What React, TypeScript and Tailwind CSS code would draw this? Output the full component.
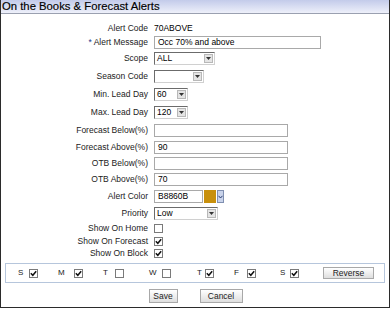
import React from 'react';

const font = "font-['Liberation_Sans',Arial,sans-serif]";

const Check = ({ checked }: { checked?: boolean }) => (
  <span className="inline-flex h-[9px] w-[9px] shrink-0 items-center justify-center border border-[#7a7a7a] bg-white">
    {checked && (
      <svg viewBox="0 0 7 7" className="h-[7px] w-[7px]">
        <path d="M0.8 3.3 L2.8 5.3 L6.2 1.2" fill="none" stroke="#111" strokeWidth="1.5" />
      </svg>
    )}
  </span>
);

const Select = ({ value, width }: { value: string; width: string }) => (
  <div className={`flex h-[13px] items-stretch border border-t-[#6b6b6b] border-l-[#6b6b6b] border-r-[#d0d0d0] border-b-[#d0d0d0] bg-white ${width}`}>
    <span className="flex-1 truncate pl-[2px] leading-[11px] text-[8.5px] text-black">{value}</span>
    <span className="m-[1px] flex w-[9px] items-center justify-center border border-[#b8b8b8] bg-[#e4e4e4]">
      <svg viewBox="0 0 5 3" className="h-[3px] w-[5px]">
        <path d="M0 0 H5 L2.5 3 Z" fill="#333" />
      </svg>
    </span>
  </div>
);

const TextInput = ({ value, width }: { value?: string; width: string }) => (
  <div className={`h-[13px] border border-[#a9a9a9] bg-white pl-[3px] leading-[11px] text-[8.5px] text-black ${width}`}>
    {value}
  </div>
);

const Row = ({ label, h, children, star }: { label: string; h: string; children?: React.ReactNode; star?: boolean }) => (
  <div className={`grid grid-cols-[147px_1fr] items-center gap-x-[6px] ${h}`}>
    <div className="text-right text-[8.5px] text-[#222]">
      {star && <span className="text-[#1a3d8f]">* </span>}
      {label}
    </div>
    <div className="flex items-center">{children}</div>
  </div>
);

const days = [
  { d: 'S', c: true, ml: 'ml-[12px]', w: 'w-[11px]' },
  { d: 'M', c: true, ml: 'ml-[20px]', w: 'w-[16px]' },
  { d: 'T', c: false, ml: 'ml-[20px]', w: 'w-[12px]' },
  { d: 'W', c: false, ml: 'ml-[25px]', w: 'w-[13px]' },
  { d: 'T', c: true, ml: 'ml-[26px]', w: 'w-[8px]' },
  { d: 'F', c: true, ml: 'ml-[20px]', w: 'w-[13px]' },
  { d: 'S', c: true, ml: 'ml-[24px]', w: 'w-[10px]' },
];

export default function App() {
  return (
    <div className={`${font} h-[308px] w-[390px] border-x border-b border-[#2b2b2b] bg-white`}>
      <div className="h-[14px] border-b border-[#9aa0b0] bg-gradient-to-b from-[#c3cbea] to-[#eef0fa] pl-[1px] text-[11.3px] leading-[13px] text-black [-webkit-text-stroke:0.15px_black]">
        On the Books &amp; Forecast Alerts
      </div>
      <div className="pt-[7px]">
        <Row label="Alert Code" h="h-[14px]">
          <span className="text-[8.5px] text-black">70ABOVE</span>
        </Row>
        <Row label="Alert Message" h="h-[15px]" star>
          <TextInput value="Occ 70% and above" width="w-[167px]" />
        </Row>
        <Row label="Scope" h="h-[17px]">
          <Select value="ALL" width="w-[61px]" />
        </Row>
        <Row label="Season Code" h="h-[18px]">
          <Select value="" width="w-[50px]" />
        </Row>
        <Row label="Min. Lead Day" h="h-[18px]">
          <Select value="60" width="w-[34px]" />
        </Row>
        <Row label="Max. Lead Day" h="h-[19px]">
          <Select value="120" width="w-[34px]" />
        </Row>
        <Row label="Forecast Below(%)" h="h-[17px]">
          <TextInput width="w-[134px]" />
        </Row>
        <Row label="Forecast Above(%)" h="h-[16px]">
          <TextInput value="90" width="w-[134px]" />
        </Row>
        <Row label="OTB Below(%)" h="h-[16px]">
          <TextInput width="w-[134px]" />
        </Row>
        <Row label="OTB Above(%)" h="h-[17px]">
          <TextInput value="70" width="w-[134px]" />
        </Row>
        <Row label="Alert Color" h="h-[17px]">
          <TextInput value="B8860B" width="w-[49px]" />
          <span className="ml-[1px] h-[13px] w-[12px] bg-[#c8900c]" />
          <span className="ml-[1px] flex h-[13px] w-[7px] items-center justify-center border border-[#7f8fb0] bg-[#c9d3ea]">
            <svg viewBox="0 0 5 4" className="h-[4px] w-[5px]">
              <path d="M0.5 0.8 L2.5 3 L4.5 0.8" fill="none" stroke="#2c3f73" strokeWidth="1" />
            </svg>
          </span>
        </Row>
        <Row label="Priority" h="h-[16px]">
          <Select value="Low" width="w-[64px]" />
        </Row>
        <Row label="Show On Home" h="h-[14px]">
          <Check />
        </Row>
        <Row label="Show On Forecast" h="h-[12px]">
          <Check checked />
        </Row>
        <Row label="Show On Block" h="h-[12px]">
          <Check checked />
        </Row>
      </div>
      <div className="mx-[4px] mt-[4px] flex h-[20px] items-center border border-[#b6c6dc]">
        {days.map((x, i) => (
          <div key={i} className={`flex items-center ${x.ml}`}>
            <span className={`text-[8px] text-[#222] ${x.w}`}>{x.d}</span>
            <Check checked={x.c} />
          </div>
        ))}
        <button className="ml-[24px] h-[12px] w-[51px] border border-[#a8a8a8] bg-gradient-to-b from-[#ffffff] to-[#dedede] text-[8.5px] leading-[10px] text-[#222]">
          Reverse
        </button>
      </div>
      <div className="mt-[6px] flex justify-center gap-[22px] pl-[1px]">
        <button className="h-[14px] w-[29px] border border-[#a8a8a8] bg-gradient-to-b from-[#ffffff] to-[#dedede] text-[8.5px] leading-[12px] text-[#222]">
          Save
        </button>
        <button className="h-[14px] w-[43px] border border-[#a8a8a8] bg-gradient-to-b from-[#ffffff] to-[#dedede] text-[8.5px] leading-[12px] text-[#222]">
          Cancel
        </button>
      </div>
    </div>
  );
}
